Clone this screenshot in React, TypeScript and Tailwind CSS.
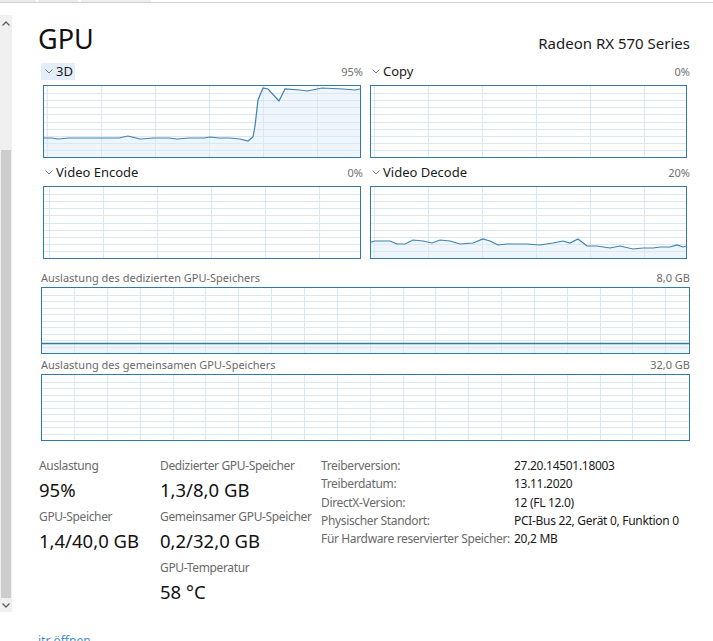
import React from "react";

type Pt = [number, number];

const BORDER = "#2f7aa6";
const GRID = "#d9e8f2";
const FILL = "#eef5fb";
const LINE = "#3f82b0";

function ChartSvg({
  w,
  h,
  vOffset,
  vStep,
  hDiv,
  points,
  level,
}: {
  w: number;
  h: number;
  vOffset: number;
  vStep: number;
  hDiv: number;
  points?: Pt[];
  level?: number;
}) {
  const vLines: number[] = [];
  for (let x = vOffset; x < w; x += vStep) vLines.push(Math.round(x) + 0.5);
  const hLines: number[] = [];
  for (let i = 1; i < hDiv; i++) hLines.push(Math.round((i * h) / hDiv) + 0.5);
  let area = "";
  let line = "";
  if (points) {
    line = points.map((p, i) => `${i ? "L" : "M"}${p[0]},${p[1]}`).join(" ");
    area = `${line} L${w},${h} L0,${h} Z`;
  }
  return (
    <svg width={w} height={h} className="block">
      {level !== undefined && (
        <rect x={0} y={level} width={w} height={h - level} fill={FILL} />
      )}
      {points && <path d={area} fill={FILL} />}
      {hLines.map((y) => (
        <line key={"h" + y} x1={0} x2={w} y1={y} y2={y} stroke={GRID} strokeWidth={1} />
      ))}
      {vLines.map((x) => (
        <line key={"v" + x} x1={x} x2={x} y1={0} y2={h} stroke={GRID} strokeWidth={1} />
      ))}
      {points && <path d={line} fill="none" stroke={LINE} strokeWidth={1.2} />}
      {level !== undefined && (
        <line x1={0} x2={w} y1={level + 0.5} y2={level + 0.5} stroke={BORDER} strokeWidth={1.3} />
      )}
    </svg>
  );
}

function Chevron() {
  return (
    <svg width="8" height="5" viewBox="0 0 8 5" className="block">
      <polyline points="0.5,0.5 4,4 7.5,0.5" fill="none" stroke="#777" strokeWidth="1" />
    </svg>
  );
}

const pts3d: Pt[] = [
  [0, 52], [8, 52], [14, 53], [25, 52], [40, 52], [60, 52], [75, 52], [84, 50], [92, 52],
  [96, 53], [110, 52], [125, 52], [133, 53], [145, 52], [160, 52], [166, 51], [175, 52],
  [186, 52], [196, 53], [204, 55], [209, 51], [211, 40], [214, 14], [219, 2], [224, 3],
  [235, 15], [241, 3], [256, 4], [263, 5], [278, 2], [299, 3], [311, 4], [316, 3],
];

const ptsDecode: Pt[] = [
  [0, 55], [4, 54], [12, 54], [19, 54], [26, 57], [34, 57], [42, 53], [52, 54], [61, 56],
  [69, 53], [79, 54], [89, 57], [102, 56], [112, 52], [119, 54], [127, 58], [136, 57],
  [156, 57], [169, 58], [182, 56], [192, 54], [199, 56], [207, 52], [216, 59], [226, 59],
  [239, 61], [249, 59], [262, 62], [272, 61], [282, 61], [289, 60], [299, 60], [306, 58],
  [312, 60], [316, 59],
];

function SmallChart({
  label,
  pct,
  highlight,
  boxW,
  vOffset,
  points,
}: {
  label: string;
  pct: string;
  highlight?: boolean;
  boxW: number;
  vOffset: number;
  points?: Pt[];
}) {
  return (
    <div className="w-[322px] flex flex-col">
      <div className="h-[22px] flex items-start justify-between">
        <div
          className={
            "h-[17px] flex items-center pl-[4px] pr-[2px] gap-[3px] " +
            (highlight ? "bg-[#e3eef9]" : "")
          }
        >
          <Chevron />
          <span className="text-[13px] leading-none text-[#1a1a1a] mt-[-1px]">{label}</span>
        </div>
        <span className="h-[17px] flex items-center text-[11px] leading-none text-[#707070]">
          {pct}
        </span>
      </div>
      <div
        className="ml-[2px] h-[73px] border border-[#2f7aa6] bg-white"
        style={{ width: boxW }}
      >
        <ChartSvg w={boxW - 2} h={71} vOffset={vOffset} vStep={54} hDiv={10} points={points} />
      </div>
    </div>
  );
}

function MemChart({ label, value, level }: { label: string; value: string; level?: number }) {
  return (
    <>
      <div className="h-[19px] flex items-center justify-between text-[11px] leading-none text-[#6a6a6a]">
        <span>{label}</span>
        <span>{value}</span>
      </div>
      <div className="w-[649px] h-[67px] border border-[#2f7aa6] bg-white">
        <ChartSvg w={647} h={65} vOffset={32} vStep={32.85} hDiv={10} level={level} />
      </div>
    </>
  );
}

function Stat({ label, value }: { label: string; value: string }) {
  return (
    <div className="flex flex-col">
      <div className="h-[16px] flex items-center text-[12px] tracking-[-0.35px] leading-none text-[#6a6a6a] whitespace-nowrap">
        {label}
      </div>
      <div className="mt-[2px] h-[28px] flex items-center text-[18.5px] leading-none text-[#111] whitespace-nowrap">
        {value}
      </div>
    </div>
  );
}

const info: [string, string][] = [
  ["Treiberversion:", "27.20.14501.18003"],
  ["Treiberdatum:", "13.11.2020"],
  ["DirectX-Version:", "12 (FL 12.0)"],
  ["Physischer Standort:", "PCI-Bus 22, Gerät 0, Funktion 0"],
  ["Für Hardware reservierter Speicher:", "20,2 MB"],
];

export default function App() {
  return (
    <div className="w-[713px] h-[641px] overflow-hidden bg-white flex flex-col font-['Noto_Sans',sans-serif]">
      <div className="h-[2px] flex shrink-0">
        <div className="w-[36px] bg-[#ececec]" />
        <div className="w-[2px]" />
        <div className="w-[40px] bg-[#ececec]" />
        <div className="w-[3px]" />
        <div className="w-[70px] bg-[#efefef]" />
      </div>
      <div className="h-px bg-[#d2d2d2] shrink-0" />
      <div className="flex">
        {/* scrollbar */}
        <div className="w-[12px] mt-[12px] h-[597px] bg-[#f0f0f0] flex flex-col shrink-0">
          <div className="h-[17px] flex items-center justify-center">
            <svg width="8" height="5" viewBox="0 0 8 5">
              <polyline points="0.5,4.5 4,1 7.5,4.5" fill="none" stroke="#606060" strokeWidth="1.3" />
            </svg>
          </div>
          <div className="h-[118px]" />
          <div className="h-[448px] mx-[1px] bg-[#cdcdcd]" />
          <div className="h-[14px] flex items-center justify-center">
            <svg width="8" height="5" viewBox="0 0 8 5">
              <polyline points="0.5,0.5 4,4 7.5,0.5" fill="none" stroke="#606060" strokeWidth="1.3" />
            </svg>
          </div>
        </div>
        {/* content */}
        <div className="flex-1 pl-[29px] pr-[23px] flex flex-col">
          <div className="mt-[18px] h-[35px] flex items-baseline justify-between">
            <span className="ml-[-3px] text-[27px] leading-[36px] text-[#111]">GPU</span>
            <span className="text-[15px] leading-none text-[#1a1a1a]">Radeon RX 570 Series</span>
          </div>
          <div className="mt-[7px] flex gap-[5px]">
            <SmallChart label="3D" pct="95%" highlight boxW={318} vOffset={3} points={pts3d} />
            <SmallChart label="Copy" pct="0%" boxW={317} vOffset={3} />
          </div>
          <div className="mt-[6px] flex gap-[5px]">
            <SmallChart label="Video Encode" pct="0%" boxW={318} vOffset={5} />
            <SmallChart label="Video Decode" pct="20%" boxW={317} vOffset={3} points={ptsDecode} />
          </div>
          <div className="mt-[9px] flex flex-col">
            <MemChart label="Auslastung des dedizierten GPU-Speichers" value="8,0 GB" level={55} />
            <div className="h-px" />
            <MemChart label="Auslastung des gemeinsamen GPU-Speichers" value="32,0 GB" />
          </div>
          <div className="mt-[17px] flex">
            <div className="ml-[-2px] w-[121px] flex flex-col gap-[5px]">
              <Stat label="Auslastung" value="95%" />
              <Stat label="GPU-Speicher" value="1,4/40,0 GB" />
            </div>
            <div className="w-[161px] flex flex-col gap-[5px]">
              <Stat label="Dedizierter GPU-Speicher" value="1,3/8,0 GB" />
              <Stat label="Gemeinsamer GPU-Speicher" value="0,2/32,0 GB" />
              <Stat label="GPU-Temperatur" value="58 °C" />
            </div>
            <div className="mt-[-1px] flex flex-col text-[12px] leading-[18.3px]">
              {info.map(([k, v]) => (
                <div key={k} className="flex">
                  <span className="w-[193px] text-[#6a6a6a] tracking-[-0.35px] whitespace-nowrap">{k}</span>
                  <span className="text-[#1a1a1a] tracking-[-0.3px] whitespace-nowrap">{v}</span>
                </div>
              ))}
            </div>
          </div>
          <div className="mt-[29px] ml-[-3px] text-[12px] leading-none text-[#4a8fd0]">
            itr öffnen
          </div>
        </div>
      </div>
    </div>
  );
}
